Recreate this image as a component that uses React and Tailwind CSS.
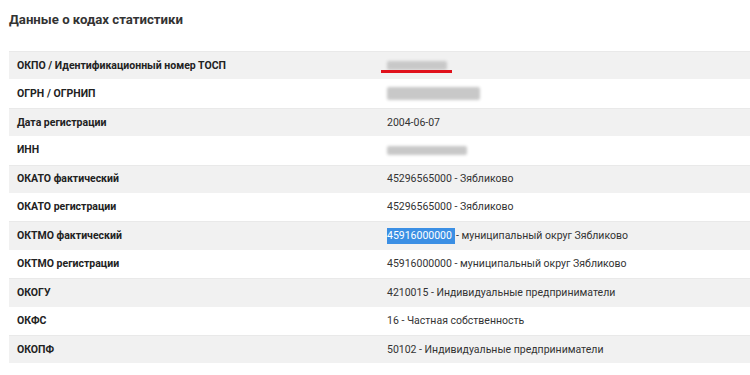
import React from 'react';

const rows = [
    { label: 'ОКПО / Идентификационный номер ТОСП', blur: 'w-[60px]', underline: true },
    { label: 'ОГРН / ОГРНИП', blur: 'w-[93px] h-[13px]' },
    { label: 'Дата регистрации', value: '2004-06-07' },
    { label: 'ИНН', blur: 'w-[80px]' },
    { label: 'ОКАТО фактический', value: '45296565000 - Зябликово' },
    { label: 'ОКАТО регистрации', value: '45296565000 - Зябликово' },
    { label: 'ОКТМО фактический', code: '45916000000', value: '- муниципальный округ Зябликово' },
    { label: 'ОКТМО регистрации', value: '45916000000 - муниципальный округ Зябликово' },
    { label: 'ОКОГУ', value: '4210015 - Индивидуальные предприниматели' },
    { label: 'ОКФС', value: '16 - Частная собственность' },
    { label: 'ОКОПФ', value: '50102 - Индивидуальные предприниматели' },
];

const Blur = ({ className }) => (
    <div className={`relative h-[9px] bg-[#c8c8c8] rounded-[2px] blur-[1.5px] ${className}`}></div>
);

const App = () => {
    return (
        <div className="w-[750px] h-[375px] bg-white overflow-hidden font-['Roboto',sans-serif] text-[#333]">
            <h2 className="pl-[9px] pt-[11px] h-[51px] text-[13.2px] font-bold text-[#333] leading-[18px]">Данные о кодах статистики</h2>
            <div className="ml-[9px] flex flex-col">
                {rows.map((r, i) => (
                    <div
                        key={i}
                        className={`h-[28.4px] flex items-center text-[10.5px] ${i % 2 === 0 ? 'bg-[#f1f1f1] border-t border-[#e9e9e9]' : 'bg-white'}`}
                    >
                        <div className="w-[370px] pl-[8px] font-bold text-[#222]">{r.label}</div>
                        <div className="flex-1 pl-[8px] relative flex items-center">
                            {r.blur && <Blur className={r.blur} />}
                            {r.underline && (
                                <div className="absolute left-[2px] top-[9px] w-[71px] h-[3px] bg-[#e0111b]"></div>
                            )}
                            {r.code && (
                                <span className="bg-[#3b8fe4] text-white pr-[3px] mr-[1px]">{r.code}</span>
                            )}
                            {r.value && <span>{r.value}</span>}
                        </div>
                    </div>
                ))}
            </div>
        </div>
    );
};

export default App;
